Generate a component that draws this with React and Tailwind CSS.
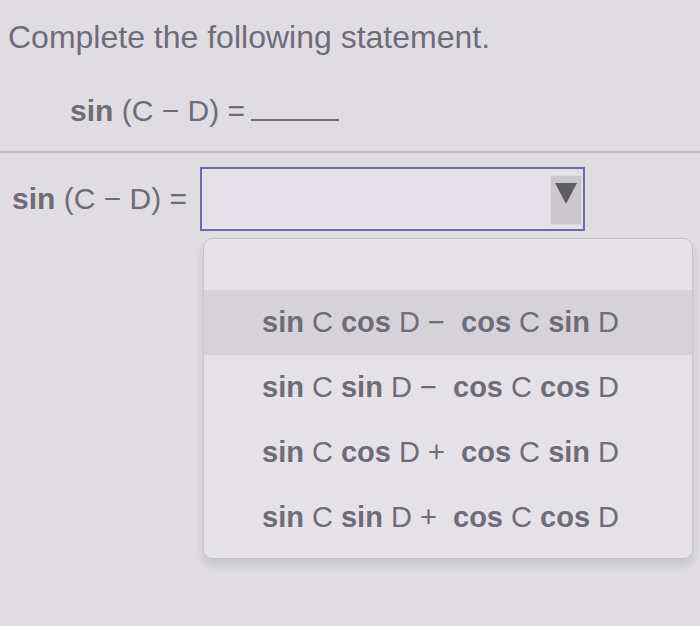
import React from "react"

const B = ({ children }) => <span className="font-bold">{children}</span>

const SinCD = () => (
    <span className="whitespace-pre">
        <B>sin</B> (C − D) =
    </span>
)

const Choice = ({ a, b, op, c, d, active }) => (
    <div className={`h-[65px] flex items-center pl-[58px] text-[29px] whitespace-pre ${active ? "bg-[#d5d3d8]" : ""}`}>
        <B>{a}</B> C <B>{b}</B> D {op}  <B>{c}</B> C <B>{d}</B> D
    </div>
)

const App = () => {
    const choices = [
        { a: "sin", b: "cos", op: "−", c: "cos", d: "sin" },
        { a: "sin", b: "sin", op: "−", c: "cos", d: "cos" },
        { a: "sin", b: "cos", op: "+", c: "cos", d: "sin" },
        { a: "sin", b: "sin", op: "+", c: "cos", d: "cos" },
    ]

    return (
        <div className="relative w-[700px] h-[626px] overflow-hidden bg-[#dfdde2] text-[#6f6c77] font-['Liberation_Sans',Arial,sans-serif]">
            <h1 className="pl-2 pt-[19px] text-[32px] leading-[36px]">Complete the following statement.</h1>

            <div className="mt-[40px] pl-[70px] text-[30px] leading-[32px] flex items-baseline">
                <SinCD />
                <span className="inline-block ml-[6px] w-[88px] h-[2px] -mb-2 bg-[#6d6a73]"></span>
            </div>

            <div className="mt-[24px] h-[2px] bg-[#b9b7bd]"></div>

            <div className="mt-[14px] flex items-center">
                <div className="w-[200px] pl-3 text-[30px] leading-[32px]">
                    <SinCD />
                </div>
                <div className="w-[385px] h-[64px] border-2 border-[#6e6ca8] bg-[#e4e2e8] flex justify-end items-start pt-[6px] pr-[1px]">
                    <div className="w-[32px] h-[50px] bg-[#cac8cd] border border-[#dcdade] flex justify-center pt-[6px]">
                        <svg width="22" height="22" viewBox="0 0 22 22">
                            <polygon points="0,1 22,1 11,22" fill="#5f5c66" />
                        </svg>
                    </div>
                </div>
            </div>

            {/* open dropdown list */}
            <div className="absolute left-[203px] top-[238px] w-[490px] h-[321px] rounded-[9px] border border-[#c6c4c9] bg-[#e4e2e6] shadow-[0_6px_10px_rgba(0,0,0,0.12)] pt-[51px] overflow-hidden">
                {choices.map((c, i) => (
                    <Choice key={i} {...c} active={i === 0} />
                ))}
            </div>
        </div>
    )
}

export default App
